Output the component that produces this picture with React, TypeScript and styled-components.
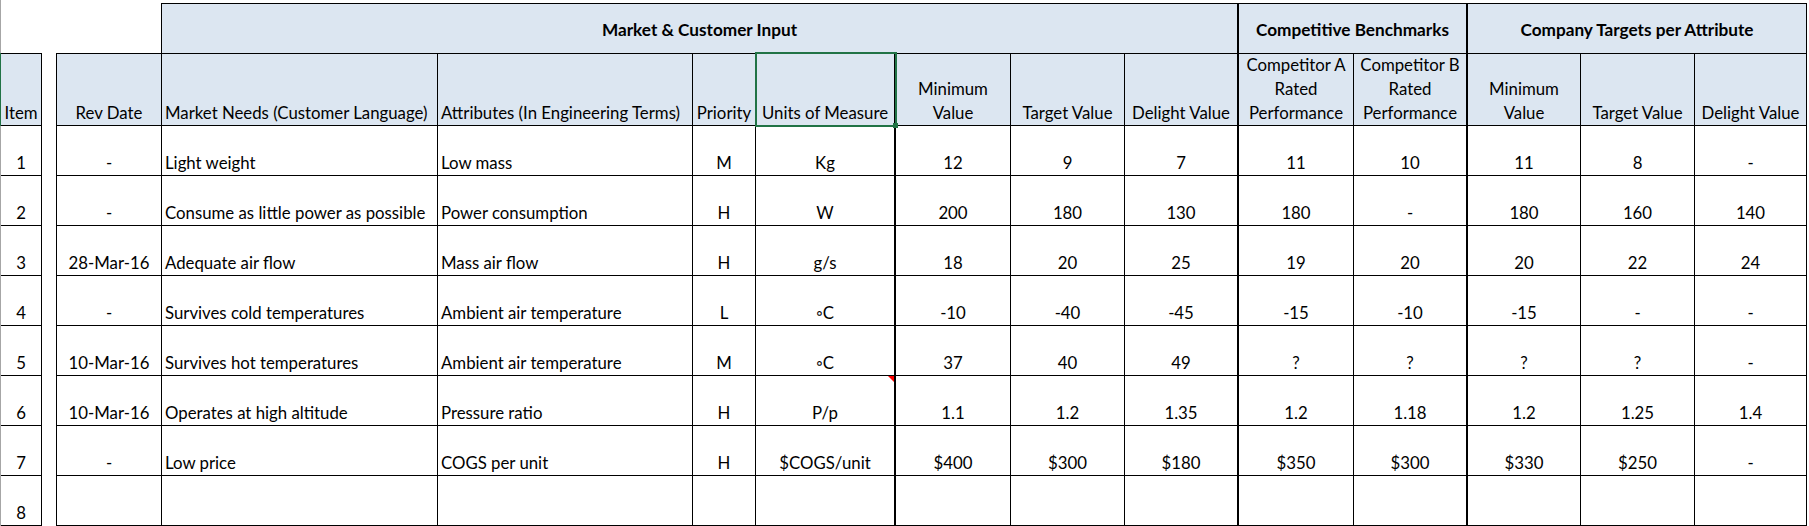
import React from 'react';
import styled, { createGlobalStyle } from 'styled-components';

const GlobalStyle = createGlobalStyle`
  html, body { margin: 0; padding: 0; background: #ffffff; }
  body { font-family: Lato, "Liberation Sans", sans-serif; color: #000000; }
`;

const COLS = '41px 14px 106px 276px 255px 63px 140px 115px 114px 114px 115px 114px 113px 114px 112px';

const Sheet = styled.div`
  display: grid;
  grid-template-columns: ${COLS};
  grid-template-rows: 50px 73px repeat(8, 50px);
  width: max-content;
  padding-top: 3px;
  border-left: 1px solid #a6a6a6;
  font-size: 16.8px;
`;

type Align = 'left' | 'center';

const Cell = styled.div<{ $align?: Align; $thick?: boolean; $leftBorder?: boolean }>`
  position: relative;
  box-sizing: border-box;
  display: flex;
  flex-direction: column;
  justify-content: flex-end;
  align-items: ${(p) => (p.$align === 'left' ? 'flex-start' : 'center')};
  text-align: ${(p) => (p.$align === 'left' ? 'left' : 'center')};
  padding: 0 2px 0 ${(p) => (p.$align === 'left' ? '3px' : '2px')};
  border-right: ${(p) => (p.$thick ? 2 : 1)}px solid #000000;
  border-bottom: 1px solid #000000;
  border-left: ${(p) => (p.$leftBorder ? '1px solid #000000' : 'none')};
  line-height: 24px;
  white-space: nowrap;
`;

const HeadCell = styled(Cell)<{ $first?: boolean }>`
  background: #dce6f1;
  border-top: 1px solid #000000;
  box-shadow: ${(p) => (p.$first ? '-1px 0 0 #217346' : 'none')};
`;

const DataCell = styled(Cell)`
  background: #ffffff;
`;

const Gap = styled.div`
  background: #ffffff;
`;

const GroupSpacer = styled.div`
  grid-column: 1 / 4;
  border-right: 1px solid #000000;
`;

const GroupHeader = styled.div<{ $span: number; $thick?: boolean }>`
  grid-column: span ${(p) => p.$span};
  box-sizing: border-box;
  display: flex;
  align-items: center;
  justify-content: center;
  background: #dce6f1;
  border-top: 1px solid #000000;
  border-right: ${(p) => (p.$thick ? 2 : 1)}px solid #000000;
  font-weight: 700;
  font-size: 17.2px;
  padding-top: 1px;
`;

const Selection = styled.span`
  position: absolute;
  left: -1px;
  top: -2px;
  right: -3px;
  bottom: -2px;
  border: 2px solid #217346;
  z-index: 2;
  pointer-events: none;
  &::after {
    content: '';
    position: absolute;
    right: -3px;
    bottom: -3px;
    width: 5px;
    height: 5px;
    background: #217346;
  }
`;

const CommentMark = styled.span`
  position: absolute;
  top: 0;
  right: 0;
  width: 6px;
  height: 6px;
  background: #ff0000;
  clip-path: polygon(0 0, 100% 0, 100% 100%);
`;

type ColDef = { align: Align; thick?: boolean; leftBorder?: boolean };

// columns after the gap: Rev Date ... Delight (company)
const COL_DEFS: ColDef[] = [
  { align: 'center', leftBorder: true }, // Rev Date
  { align: 'left' }, // Market Needs
  { align: 'left' }, // Attributes
  { align: 'center' }, // Priority
  { align: 'center', thick: true }, // Units
  { align: 'center' }, // Min
  { align: 'center' }, // Target
  { align: 'center', thick: true }, // Delight
  { align: 'center' }, // Comp A
  { align: 'center', thick: true }, // Comp B
  { align: 'center' }, // Min
  { align: 'center' }, // Target
  { align: 'center' }, // Delight
];

const HEADERS: React.ReactNode[] = [
  'Rev Date',
  'Market Needs (Customer Language)',
  'Attributes (In Engineering Terms)',
  'Priority',
  'Units of Measure',
  <>Minimum<br />Value</>,
  'Target Value',
  'Delight Value',
  <>Competitor A<br />Rated<br />Performance</>,
  <>Competitor B<br />Rated<br />Performance</>,
  <>Minimum<br />Value</>,
  'Target Value',
  'Delight Value',
];

const ROWS: string[][] = [
  ['1', '-', 'Light weight', 'Low mass', 'M', 'Kg', '12', '9', '7', '11', '10', '11', '8', '-'],
  ['2', '-', 'Consume as little power as possible', 'Power consumption', 'H', 'W', '200', '180', '130', '180', '-', '180', '160', '140'],
  ['3', '28-Mar-16', 'Adequate air flow', 'Mass air flow', 'H', 'g/s', '18', '20', '25', '19', '20', '20', '22', '24'],
  ['4', '-', 'Survives cold temperatures', 'Ambient air temperature', 'L', '\u25E6C', '-10', '-40', '-45', '-15', '-10', '-15', '-', '-'],
  ['5', '10-Mar-16', 'Survives hot temperatures', 'Ambient air temperature', 'M', '\u25E6C', '37', '40', '49', '?', '?', '?', '?', '-'],
  ['6', '10-Mar-16', 'Operates at high altitude', 'Pressure ratio', 'H', 'P/p', '1.1', '1.2', '1.35', '1.2', '1.18', '1.2', '1.25', '1.4'],
  ['7', '-', 'Low price', 'COGS per unit', 'H', '$COGS/unit', '$400', '$300', '$180', '$350', '$300', '$330', '$250', '-'],
  ['8', '', '', '', '', '', '', '', '', '', '', '', '', ''],
];

export default function App() {
  return (
    <>
      <GlobalStyle />
      <Sheet>
        <GroupSpacer />
        <GroupHeader $span={7} $thick>Market &amp; Customer Input</GroupHeader>
        <GroupHeader $span={2} $thick>Competitive Benchmarks</GroupHeader>
        <GroupHeader $span={3}>Company Targets per Attribute</GroupHeader>

        <HeadCell $align="center" $first>Item</HeadCell>
        <Gap />
        {HEADERS.map((h, i) => {
          const d = COL_DEFS[i];
          return (
            <HeadCell key={i} $align={d.align} $thick={d.thick} $leftBorder={d.leftBorder}>
              <span>{h}</span>
              {i === 4 && <Selection />}
            </HeadCell>
          );
        })}

        {ROWS.map((row, r) => (
          <React.Fragment key={r}>
            <DataCell $align="center">{row[0]}</DataCell>
            <Gap />
            {row.slice(1).map((v, i) => {
              const d = COL_DEFS[i];
              return (
                <DataCell key={i} $align={d.align} $thick={d.thick} $leftBorder={d.leftBorder}>
                  {v}
                  {r === 5 && i === 4 && <CommentMark />}
                </DataCell>
              );
            })}
          </React.Fragment>
        ))}
      </Sheet>
    </>
  );
}
